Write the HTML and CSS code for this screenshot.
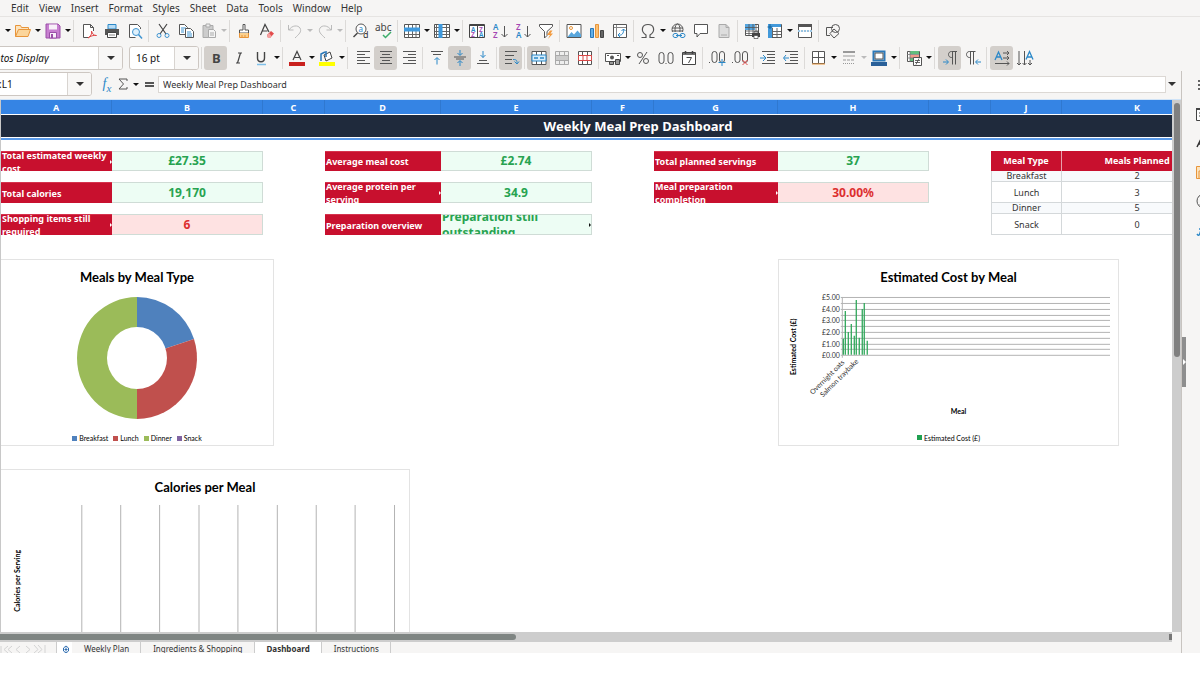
FILE: index.html
```html
<!DOCTYPE html>
<html lang="en">
<head>
<meta charset="utf-8">
<title>Weekly Meal Prep Dashboard</title>
<link rel="stylesheet" href="styles.css">
</head>
<body>
<div class="app">
  <nav class="menubar">
    <button>Edit</button><button>View</button><button>Insert</button><button>Format</button><button>Styles</button><button>Sheet</button><button>Data</button><button>Tools</button><button>Window</button><button>Help</button>
  </nav>

  <div class="toolbar standard">
    <button class="drop" aria-label="New options"></button>
    <button class="tool" aria-label="Open"><svg viewBox="0 0 16 16"><path d="M.5 13.500V2.500h5l1 2h7v2" fill="#fce3bd" stroke="#e8953a"/><path d="M.5 13.500 3.500 6.500h12l-2.500 7z" fill="#fbd59b" stroke="#e8953a"/></svg></button><button class="drop" aria-label="Open options"></button>
    <button class="tool" aria-label="Save"><svg viewBox="0 0 16 16"><path d="M1 1h12l2 2v12H1z" fill="#c77fd0" stroke="#9b4fa8"/><path d="M4 1.500h8v5H4z" fill="#f8f0f9"/><path d="M4.500 9.500h7V15h-7z" fill="#f8f0f9" stroke="#9b4fa8"/><path d="M6 11h2v4H6z" fill="#9b4fa8"/></svg></button><button class="drop" aria-label="Save options"></button>
    <span class="sep wide"></span>
    <button class="tool" aria-label="Export as PDF"><svg viewBox="0 0 16 16"><path d="M8 14.500H2.500v-13h7l3 3V8M9.500 1.500v3h3" fill="#fff" stroke="#555"/><path d="M7 15c3-2 4-4 3.500-7 1 3 2 4.500 5 4.500-3-.5-6 .5-8.500 2.500z" fill="none" stroke="#e04848"/></svg></button>
    <button class="tool" aria-label="Print"><svg viewBox="0 0 16 16"><path d="M4 1.500h8V6H4z" fill="#b7dcf5" stroke="#2b88c8"/><path d="M1 6h14v6H1z" fill="#555"/><path d="M3.500 9.500h9v5h-9z" fill="#fff" stroke="#444"/><path d="M5 12h6" stroke="#888"/></svg></button>
    <button class="tool" aria-label="Print preview"><svg viewBox="0 0 16 16"><path d="M13.500 6V4.500l-3-3h-8v13h6" fill="#fff" stroke="#555"/><circle cx="9" cy="9" r="3.500" fill="#dff0fb" stroke="#3f94d1"/><path d="m11.500 11.500 3.500 4" stroke="#3f94d1" stroke-width="1.500"/></svg></button>
    <span class="sep"></span>
    <button class="tool" aria-label="Cut"><svg viewBox="0 0 16 16" fill="none"><path d="M4 1l7 10M12 1 5 11" stroke="#444" stroke-width="1.200"/><circle cx="4" cy="12.500" r="2" stroke="#3f94d1"/><circle cx="12" cy="12.500" r="2" stroke="#3f94d1"/></svg></button>
    <button class="tool" aria-label="Copy"><svg viewBox="0 0 16 16"><path d="M1.500 1.500h5l3 3v7h-8z" fill="#fff" stroke="#555"/><path d="M3 5h5M3 7h3M3 9h3" stroke="#3f94d1"/><path d="M7.500 5.500h5l3 3v6h-8z" fill="#fff" stroke="#555"/><path d="M9 9h4M9 11h5M9 13h5" stroke="#3f94d1"/></svg></button>
    <button class="tool off" aria-label="Paste"><svg viewBox="0 0 16 16"><path d="M2 2.500h10v12H2z" fill="#ccc" stroke="#aaa"/><path d="M5 1h4v3H5z" fill="#eee" stroke="#aaa"/><path d="M7.500 6.500h5l2 2v6h-7z" fill="#f5f5f5" stroke="#aaa"/><path d="M9 10h4M9 12h4" stroke="#aaa"/></svg></button><button class="drop off" aria-label="Paste options"></button>
    <span class="sep"></span>
    <button class="tool" aria-label="Clone formatting"><svg viewBox="0 0 16 16"><path d="M7 1.500h2V7h3.500v3h-9V7H7z" fill="#fff" stroke="#555"/><path d="M3.500 10v4.500h9V10" fill="#fbd08e" stroke="#e8953a"/><path d="M6 12v2M9 12v2" stroke="#e8953a"/></svg></button>
    <button class="tool" aria-label="Clear formatting"><svg viewBox="0 0 16 16"><path d="M1.500 12 6 1.500 10 9M3.500 8h5" fill="none" stroke="#444" stroke-width="1.200"/><path d="m8 12 4-4 3 2.500L11 15H9z" fill="#e34c4c"/><path d="m8 12 2-2 2.500 3-1.500 2H9z" fill="#f4a0a0"/></svg></button>
    <span class="sep"></span>
    <button class="tool off" aria-label="Undo"><svg viewBox="0 0 16 16" fill="none" stroke="#bbb"><path d="M1.500 2v5h5M2 7c3-5 9-5 11-2 2 4-1 6-5 10"/></svg></button><button class="drop off" aria-label="Undo options"></button>
    <button class="tool off" aria-label="Redo"><svg viewBox="0 0 16 16" fill="none" stroke="#bbb"><path d="M14.500 2v5h-5M14 7C11 2 5 2 3 5c-2 4 1 6 5 10"/></svg></button><button class="drop off" aria-label="Redo options"></button>
    <span class="sep wide"></span>
    <button class="tool" aria-label="Find and replace"><svg viewBox="0 0 16 16"><circle cx="8" cy="6" r="5" fill="#fff" stroke="#555"/><path d="M4.500 10 .5 14" stroke="#444" stroke-width="1.500"/><text x="5.500" y="9" font-size="8" fill="#2b88c8">a</text><text x="10" y="15" font-size="9" fill="#333">d</text></svg></button>
    <button class="tool" aria-label="Spelling"><svg viewBox="0 0 16 16"><text x="-1" y="8" font-size="10" fill="#444">abc</text><path d="m7 12 2.500 2.500L15 9" fill="none" stroke="#3cae6a" stroke-width="1.500"/></svg></button>
    <span class="sep"></span>
    <button class="tool" aria-label="Row"><svg viewBox="0 0 16 16"><path d="M.5 1.500h15v13H.5z" fill="#fff" stroke="#555"/><path d="M4.500 2v12M8.500 2v12M12 2v12M1 11.500h14" stroke="#666"/><path d="M0 4.500h16v4H0z" fill="#3f9ade"/></svg></button><button class="drop" aria-label="Row options"></button>
    <button class="tool" aria-label="Column"><svg viewBox="0 0 16 16"><path d="M.5 1.500h15v13H.5z" fill="#fff" stroke="#555"/><path d="M1 4.500h14M1 8.500h14M1 11.500h14M12.500 2v12M2.500 2v12" stroke="#666"/><path d="M4.500 1h4v14h-4z" fill="#3f9ade"/></svg></button><button class="drop" aria-label="Column options"></button>
    <span class="sep"></span>
    <button class="tool" aria-label="Sort"><svg viewBox="0 0 16 16"><path d="M.5 1.500h15v13H.5z" fill="#fff" stroke="#444"/><path d="M1 2.500h14M8.500 2v12" stroke="#444"/><g font-size="6.500" font-weight="600"><text x="2" y="8.500" fill="#2b88c8">A</text><text x="2" y="14" fill="#a445b2">Z</text><text x="10" y="8.500" fill="#a445b2">Z</text><text x="10" y="14" fill="#2b88c8">A</text></g></svg></button>
    <button class="tool" aria-label="Sort ascending"><svg viewBox="0 0 16 16"><g font-size="8" font-weight="600"><text x="1" y="7" fill="#2b88c8">A</text><text x="1" y="15" fill="#a445b2">Z</text></g><path d="M12.500 3v11M9.500 11l3 3 3-3" fill="none" stroke="#555"/></svg></button>
    <button class="tool" aria-label="Sort descending"><svg viewBox="0 0 16 16"><g font-size="8" font-weight="600"><text x="1" y="7" fill="#a445b2">Z</text><text x="1" y="15" fill="#2b88c8">A</text></g><path d="M12.500 3v11M9.500 11l3 3 3-3" fill="none" stroke="#555"/></svg></button>
    <button class="tool" aria-label="AutoFilter"><svg viewBox="0 0 16 16"><path d="M1.500 1.500h13v2L9 8.500v4L6.500 15V8.500l-5-5z" fill="#fff" stroke="#555"/><path d="M12 7.500 9 12h3l-2 4 5-5.500h-2.500l2-3z" fill="#f29a3e"/></svg></button>
    <span class="sep"></span>
    <button class="tool" aria-label="Image"><svg viewBox="0 0 16 16"><path d="M1 1.500h14v13H1z" fill="#fff" stroke="#555"/><circle cx="5" cy="5" r="1.500" fill="none" stroke="#e8953a"/><path d="m1.500 14 4-5 2.500 2.500 3.500-4 3.500 4V14z" fill="#58a6dc"/></svg></button>
    <button class="tool" aria-label="Chart"><svg viewBox="0 0 16 16"><path d="M1.500 5.500h3v9h-3z" fill="#63b0e8" stroke="#2b78b8"/><path d="M6.500 1.500h3v13h-3z" fill="#fbc074" stroke="#e8953a"/><path d="M11.500 7.500h3v7h-3z" fill="#666" stroke="#444"/></svg></button>
    <button class="tool" aria-label="Pivot table"><svg viewBox="0 0 16 16"><path d="M1.500 1.500h13v13h-13z" fill="#fff" stroke="#555"/><path d="M2 4.500h12M4.500 2v12" stroke="#888"/><path d="M6 12c4 1 6-2 5.500-6M9.500 8l2-2 2 2M8 10l-2 2 2 2" fill="none" stroke="#2b88c8"/></svg></button>
    <span class="sep"></span>
    <button class="tool" aria-label="Special character"><svg viewBox="0 0 16 16"><path d="M1.500 14.500H6V12C0 8 2 1.500 8 1.500S16 8 10 12v2.500h4.500" fill="none" stroke="#555" stroke-width="1.200"/></svg></button><button class="drop" aria-label="Special character options"></button>
    <button class="tool" aria-label="Hyperlink"><svg viewBox="0 0 16 16" fill="none"><g stroke="#555"><circle cx="7.500" cy="6.500" r="5.500"/><ellipse cx="7.500" cy="6.500" rx="2.500" ry="5.500"/><path d="M2 5h11M2 8h11"/></g><path d="M2 9h14v7H2z" fill="#f6f5f4"/><g stroke="#2b88c8"><rect x="3" y="10.500" width="5" height="4" rx="2"/><rect x="10" y="10.500" width="5" height="4" rx="2"/><path d="M6 12.500h6"/></g></svg></button>
    <button class="tool" aria-label="Comment"><svg viewBox="0 0 16 16"><path d="M1.500 1.500h13v9H7L4 14v-3.500H1.500z" fill="#fff" stroke="#555"/></svg></button>
    <button class="tool off" aria-label="Headers and footers"><svg viewBox="0 0 16 16"><path d="M3 1.500h7l3 3v10H3z" fill="#ddd" stroke="#aaa"/><path d="M10 1.500v3h3M5 12h6" fill="none" stroke="#aaa"/></svg></button>
    <span class="sep"></span>
    <button class="tool" aria-label="Define print area"><svg viewBox="0 0 16 16"><path d="M1.500 1.500h13v11h-13z" fill="#fff" stroke="#555"/><path d="M1 1h10v6H1z" fill="#55a5df"/><path d="M1 4.500h14M1 8h14M1 10.500h8M5 1v12M9 1v9M12 1v8" stroke="#555" stroke-width=".8"/><path d="M8 10h8v4H8z" fill="#444"/><path d="M10 8.500h4V10h-4zM10 12.500h4v3h-4z" fill="#fff" stroke="#444" stroke-width=".7"/></svg></button>
    <button class="tool" aria-label="Freeze rows and columns"><svg viewBox="0 0 16 16"><path d="M1.500 1.500h13v13h-13z" fill="#fff" stroke="#555"/><path d="M1 1h13v3H1zM1 1h4v14H1z" fill="#4399da"/><path d="M5.500 5v9M10 5v9M5 8.500h9M5 11.500h9" stroke="#666"/><path d="M.5 4h5M3 1v5" stroke="#16649c"/></svg></button><button class="drop" aria-label="Freeze options"></button>
    <button class="tool" aria-label="Split window"><svg viewBox="0 0 16 16"><path d="M1.500 7V1.500h13V7M1.500 9v5.500h13V9" fill="#fff" stroke="#555"/><path d="M1 1h14v3H1z" fill="#555"/><path d="M1 8h14" stroke="#3f94d1" stroke-dasharray="2 1"/></svg></button>
    <span class="sep"></span>
    <button class="tool" aria-label="Show draw functions"><svg viewBox="0 0 16 16" fill="none" stroke="#555"><path d="M5 12.500H1.500v-8H8"/><circle cx="10.500" cy="5.500" r="4"/><path d="m9 6 5 4.500L9 15 5 10.500z"/></svg></button>
  </div>

  <div class="toolbar formatting">
    <div class="combo font-name"><input type="text" aria-label="Font name" value="Aptos Display"><button aria-label="Font list"></button></div>
    <div class="combo font-size"><input type="text" aria-label="Font size" value="16 pt"><button aria-label="Size list"></button></div>
    <span class="sep"></span>
    <button class="tool on" aria-label="Bold"><svg viewBox="0 0 16 16"><text x="4" y="13" font-size="13" font-weight="700" fill="#444">B</text></svg></button>
    <button class="tool" aria-label="Italic"><svg viewBox="0 0 16 16"><path d="M7 3h4M5 13h4M9.500 3l-3 10" fill="none" stroke="#444" stroke-width="1.200"/></svg></button>
    <button class="tool" aria-label="Underline"><svg viewBox="0 0 16 16"><path d="M3.500 2v6c0 5 7 5 7 0V2" fill="none" stroke="#444" stroke-width="1.400"/><path d="M3 14.500h9" stroke="#7fc0ea" stroke-width="1.500"/></svg></button><button class="drop" aria-label="Underline options"></button>
    <span class="sep"></span>
    <button class="tool" aria-label="Font colour"><svg viewBox="0 0 16 16"><path d="M4 10 8 1.500 12 10M5.500 7.500h5" fill="none" stroke="#444" stroke-width="1.200"/><path d="M0 12h16v4H0z" fill="#c9211e"/></svg></button><button class="drop" aria-label="Font colour options"></button>
    <button class="tool" aria-label="Background colour"><svg viewBox="0 0 16 16"><path d="m5 5 6-3 2 6-6 3z" fill="#fff" stroke="#444"/><path d="M2 11V4l4-2M7 1v6" fill="none" stroke="#2b78b8" stroke-width="1.500"/><path d="M0 12h16v4H0z" fill="#ff0"/></svg></button><button class="drop" aria-label="Background colour options"></button>
    <span class="sep wide"></span>
    <button class="tool" aria-label="Align left"><svg viewBox="0 0 16 16" stroke="#555"><path d="M2 1.500h13M2 4.500h8M2 7.500h13M2 10.500h8M2 13.500h13"/></svg></button>
    <button class="tool on" aria-label="Align centre"><svg viewBox="0 0 16 16" stroke="#555"><path d="M2 1.500h12M4 4.500h8M2 7.500h12M4 10.500h8M2 13.500h12"/></svg></button>
    <button class="tool" aria-label="Align right"><svg viewBox="0 0 16 16" stroke="#555"><path d="M2 1.500h13M7 4.500h8M2 7.500h13M7 10.500h8M2 13.500h13"/></svg></button>
    <span class="sep"></span>
    <button class="tool" aria-label="Align top"><svg viewBox="0 0 16 16" fill="none"><path d="M2 1.500h12M4 4.500h8" stroke="#555"/><path d="M8 14.500V8M5.500 10 8 7.500l2.500 2.500" stroke="#2b88c8"/></svg></button>
    <button class="tool on" aria-label="Centre vertically"><svg viewBox="0 0 16 16" fill="none"><path d="M2 7h12M4 9h8" stroke="#555"/><path d="M8 0v5M5.500 3 8 5.500 10.500 3M8 16v-5M5.500 13 8 10.500l2.500 2.500" stroke="#2b88c8"/></svg></button>
    <button class="tool" aria-label="Align bottom"><svg viewBox="0 0 16 16" fill="none"><path d="M4 10.500h8M2 13.500h12" stroke="#555"/><path d="M8 1v6.500M5.500 5 8 7.500 10.500 5" stroke="#2b88c8"/></svg></button>
    <span class="sep"></span>
    <button class="tool on" aria-label="Wrap text"><svg viewBox="0 0 16 16" fill="none"><path d="M2 1.500h12M2 5.500h9M2 9.500h7M2 13.500h7" stroke="#555"/><path d="M10 9.500c4 0 4 1 4 4M11.500 11.500l2.500 2.500 2-2.500" stroke="#2b88c8"/></svg></button>
    <span class="sep"></span>
    <button class="tool on" aria-label="Merge and centre cells"><svg viewBox="0 0 16 16"><path d="M1 1.500h14v13H1z" fill="#fff" stroke="#555"/><path d="M5.500 1v4M10.500 1v4M5.500 11v4M10.500 11v4" stroke="#555"/><path d="M1 5h14v6H1z" fill="#d7edfb" stroke="#2b88c8"/><path d="M3 8h10" stroke="#2b88c8" stroke-width="1.500" stroke-dasharray="4 2"/></svg></button>
    <button class="tool off" aria-label="Merge cells"><svg viewBox="0 0 16 16"><path d="M1.500 1.500h13v13h-13z" fill="#eee" stroke="#aaa"/><path d="M1 5.500h14M1 10.500h14M5.500 1v4M10.500 1v4M5.500 11v4M10.500 11v4" stroke="#aaa"/><path d="M2 6h12v4H2z" fill="#ccc"/></svg></button>
    <button class="tool" aria-label="Split cells"><svg viewBox="0 0 16 16"><path d="M1.500 1.500h13v13h-13z" fill="#fff" stroke="#555"/><path d="M5.500 1v4M10.500 1v4M5.500 11v4M10.500 11v4" stroke="#555"/><path d="M1.500 5.500h13v5h-13zM6 5v6M10 5v6" fill="#fff" stroke="#d94848"/></svg></button>
    <span class="sep"></span>
    <button class="tool" aria-label="Currency format"><svg viewBox="0 0 16 16"><path d="M.5 3.500h15v8H.5z" fill="#fff" stroke="#555"/><circle cx="7" cy="7.500" r="2" fill="#555"/><path d="M4.500 11.500h4v3h-4zM10.500 9.500h4v5h-4z" fill="#999" stroke="#444"/><path d="M2 5.500h2M12 5.500h2" stroke="#555"/></svg></button><button class="drop" aria-label="Currency options"></button>
    <button class="tool" aria-label="Percent format"><svg viewBox="0 0 16 16" fill="none" stroke="#555"><circle cx="5" cy="5" r="2.500"/><circle cx="11" cy="11" r="2.500"/><path d="M12 2 4 14"/></svg></button>
    <button class="tool" aria-label="Number format"><svg viewBox="0 0 16 16" fill="none" stroke="#555"><rect x="1" y="2.500" width="5" height="11" rx="2.500"/><rect x="10" y="2.500" width="5" height="11" rx="2.500"/><path d="M7.500 13.500h1"/></svg></button>
    <button class="tool" aria-label="Date format"><svg viewBox="0 0 16 16"><path d="M1.500 2.500h13v12h-13z" fill="#fff" stroke="#444"/><path d="M1 4h14M4.500 1v3M11.500 1v3" stroke="#444" stroke-width="1.500"/><path d="M5.500 7.500h5L7.500 13" fill="none" stroke="#444"/></svg></button>
    <span class="sep"></span>
    <button class="tool" aria-label="Add decimal place"><svg viewBox="0 0 16 16" fill="none" stroke="#555"><path d="M0 12.500h1"/><rect x="3" y="1.500" width="5" height="11" rx="2.500"/><rect x="10.500" y="1.500" width="5" height="11" rx="2.500"/><path d="M13 9v7M9.500 12.500h7" stroke="#2b88c8"/></svg></button>
    <button class="tool" aria-label="Delete decimal place"><svg viewBox="0 0 16 16" fill="none" stroke="#555"><path d="M0 12.500h1"/><rect x="3" y="1.500" width="5" height="11" rx="2.500"/><rect x="10.500" y="1.500" width="5" height="11" rx="2.500"/><path d="m10.500 10 5 5M15.500 10l-5 5" stroke="#e34c4c"/></svg></button>
    <span class="sep"></span>
    <button class="tool" aria-label="Increase indent"><svg viewBox="0 0 16 16" fill="none"><path d="M2 1.500h13M7 4.500h8M7 7.500h8M7 10.500h8M2 13.500h13" stroke="#555"/><path d="M0 8h5M3 5l3 3-3 3" stroke="#2b88c8"/></svg></button>
    <button class="tool" aria-label="Decrease indent"><svg viewBox="0 0 16 16" fill="none"><path d="M2 1.500h13M7 4.500h8M7 7.500h8M7 10.500h8M2 13.500h13" stroke="#555"/><path d="M6 8H1M3 5 .5 8 3 11" stroke="#2b88c8"/></svg></button>
    <span class="sep"></span>
    <button class="tool" aria-label="Borders"><svg viewBox="0 0 16 16"><path d="M1.500 1.500h12v12h-12z" fill="#fff" stroke="#555"/><path d="M7.500 1v13M1 7.500h13" stroke="#555"/><path d="M1 14h13" stroke="#e8953a"/></svg></button><button class="drop" aria-label="Border options"></button>
    <button class="tool off" aria-label="Border style"><svg viewBox="0 0 16 16" stroke="#999"><path d="M2 2h12" stroke-width="2"/><path d="M2 6h12"/><path d="M2 10h12" stroke-dasharray="3 1"/><path d="M2 13.500h12" stroke-dasharray="1 1"/></svg></button><button class="drop off" aria-label="Border style options"></button>
    <button class="tool" aria-label="Border colour"><svg viewBox="0 0 16 16"><path d="M2.500 1.500h11v9h-11z" fill="#fff" stroke="#2b78b8" stroke-width="2"/><path d="M4 3h8v6H4z" fill="none" stroke="#555"/><path d="M0 12h16v4H0z" fill="#2a6099"/></svg></button><button class="drop" aria-label="Border colour options"></button>
    <span class="sep"></span>
    <button class="tool" aria-label="Conditional formatting"><svg viewBox="0 0 16 16"><path d="M1.500 1.500h12v10h-12z" fill="#fff" stroke="#555"/><path d="M4 1h9v3H4z" fill="#62bd7d"/><path d="M4 5h9v3H4z" fill="#f29a8a"/><path d="M4 8h4v3H4z" fill="#62bd7d"/><path d="M4 1v11M1 4.500h12M1 8h6" stroke="#777" stroke-width=".8"/><path d="M7.500 7.500h8v8h-8z" fill="#fff" stroke="#555"/><path d="M9 10.500h5M9 12.500h5M13 8.500l-3 6" stroke="#444" stroke-width=".8"/></svg></button><button class="drop" aria-label="Conditional options"></button>
    <span class="sep wide"></span>
    <button class="tool on" aria-label="Left-to-right"><svg viewBox="0 0 16 16" fill="none"><path d="M15 1.500H9.500c-4 0-4 6 0 6h1M10.500 1.500v13M13.500 1.500v13" stroke="#555"/><path d="M1 12h5M4 9.500 6.500 12 4 14.500" stroke="#2b88c8"/></svg></button>
    <button class="tool" aria-label="Right-to-left"><svg viewBox="0 0 16 16" fill="none"><path d="M10.500 1.500h-6c-4 0-4 6 0 6h1M5.500 1.500v13M8.500 1.500v13" stroke="#555"/><path d="M16 12h-5M13 9.500 10.500 12l2.500 2.500" stroke="#2b88c8"/></svg></button>
    <span class="sep wide"></span>
    <button class="tool on" aria-label="Text direction left to right"><svg viewBox="0 0 16 16" fill="none"><path d="m1 10 3.500-8L8 10M2.500 7h4" stroke="#2b88c8" stroke-width="1.300"/><path d="M9 3h6M9 8h6M1 13.500h14M13 1l2 2-2 2M13 6l2 2-2 2M13 11.500l2 2-2 2" stroke="#555"/></svg></button>
    <button class="tool" aria-label="Text direction top to bottom"><svg viewBox="0 0 16 16" fill="none"><path d="M9 9.500 12.500 1.500 16 9.500M10.500 7h4" stroke="#2b88c8" stroke-width="1.300"/><path d="M2 1v14M7.500 1v14M13 10v5M0 13l2 2 2-2M5.500 13l2 2 2-2M11 13l2 2 2-2" stroke="#555"/></svg></button>
  </div>

  <div class="workspace">
    <main class="document">
      <div class="formula-bar">
        <div class="combo name-box"><input type="text" aria-label="Name box" value="A1:L1"><button aria-label="Name list"></button></div>
        <button class="fx" aria-label="Function wizard">f<sub>x</sub></button>
        <button class="sigma" aria-label="Select function"><svg viewBox="0 0 10 12"><path d="M9 3V1H1l4.500 5L1 11h8V9" fill="none" stroke="#555"/></svg></button><button class="drop" aria-label="Function options"></button>
        <button class="equals" aria-label="Formula"></button>
        <input class="formula" type="text" aria-label="Input line" value="Weekly Meal Prep Dashboard">
        <button class="expand" aria-label="Expand formula bar"></button>
      </div>

      <div class="viewport">
        <div class="sheet">
          <table class="grid">
            <colgroup><col class="w-label-a"><col class="w-value"><col class="w-gap"><col class="w-label-d"><col class="w-value"><col class="w-gap"><col class="w-label-g"><col class="w-value"><col class="w-gap"><col class="w-type"><col class="w-value"><col class="w-gap"></colgroup>
            <thead><tr><th>A</th><th>B</th><th>C</th><th>D</th><th>E</th><th>F</th><th>G</th><th>H</th><th>I</th><th>J</th><th>K</th><th></th></tr></thead>
            <tbody>
              <tr class="title-row"><td colspan="12">Weekly Meal Prep Dashboard</td></tr>
              <tr class="small"><td colspan="12"></td></tr>
              <tr class="big">
                <td class="label more"><div>Total estimated weekly cost</div></td><td class="value">£27.35</td><td></td>
                <td class="label"><div>Average meal cost</div></td><td class="value">£2.74</td><td></td>
                <td class="label"><div>Total planned servings</div></td><td class="value">37</td><td></td>
                <td class="head">Meal Type</td><td class="head">Meals Planned</td><td></td>
              </tr>
              <tr class="small"><td colspan="9"></td><td class="data alt">Breakfast</td><td class="data alt">2</td><td></td></tr>
              <tr class="big">
                <td class="label"><div>Total calories</div></td><td class="value">19,170</td><td></td>
                <td class="label more"><div>Average protein per serving</div></td><td class="value">34.9</td><td></td>
                <td class="label more"><div>Meal preparation completion</div></td><td class="value bad">30.00%</td><td></td>
                <td class="data">Lunch</td><td class="data">3</td><td></td>
              </tr>
              <tr class="small"><td colspan="9"></td><td class="data alt">Dinner</td><td class="data alt">5</td><td></td></tr>
              <tr class="big">
                <td class="label more"><div>Shopping items still required</div></td><td class="value bad">6</td><td></td>
                <td class="label"><div>Preparation overview</div></td><td class="value wrap more"><div>Preparation still outstanding</div></td><td></td>
                <td></td><td></td><td></td>
                <td class="data">Snack</td><td class="data">0</td><td></td>
              </tr>
            </tbody>
          </table>

          <div class="charts">
            <section class="chart meals">
              <h2>Meals by Meal Type</h2>
              <svg class="donut" viewBox="0 0 120 122">
                <path d="M60 0A60 61 0 0 1 117 42L60 61z" fill="#4f81bd"/>
                <path d="M117 42A60 61 0 0 1 60 122V61z" fill="#c0504d"/>
                <path d="M60 122A60 61 0 0 1 60 0z" fill="#9bbb59"/>
                <ellipse cx="60" cy="61" rx="30" ry="31" fill="#fff"/>
              </svg>
              <ul class="legend"><li class="blue">Breakfast</li><li class="red">Lunch</li><li class="lime">Dinner</li><li class="purple">Snack</li></ul>
            </section>
            <section class="chart cost">
              <h2>Estimated Cost by Meal</h2>
              <svg class="plot" viewBox="0 0 340 130">
                <g stroke="#b3b3b3"><path d="M62 6.500h270M62 12.500h270M62 18.500h270M62 24.500h270M62 29.500h270M62 35.500h270M62 41.500h270M62 47.500h270M62 53.500h270M62 58.500h270M62 64.500h270M63.500 6v61"/></g>
                <path d="M64.500 64V48M66.500 64V20M69.500 64V41M72.500 64V33M75.500 64V45M77.500 64V9M80.500 64V47M83.500 64V18M85.500 64V12M88.500 64V50" stroke="#2fa75a" stroke-width="1.300"/>
                <g class="tick"><text x="61" y="9">£5.00</text><text x="61" y="21">£4.00</text><text x="61" y="32">£3.00</text><text x="61" y="44">£2.00</text><text x="61" y="56">£1.00</text><text x="61" y="67">£0.00</text>
                <text transform="translate(66 72) rotate(-45)">Overnight oats</text><text transform="translate(80 71) rotate(-45)">Salmon traybake</text></g>
                <text class="axis" text-anchor="middle" transform="translate(17 56) rotate(-90)">Estimated Cost (£)</text>
                <text class="axis" text-anchor="middle" x="180" y="123">Meal</text>
              </svg>
              <ul class="legend"><li class="green">Estimated Cost (£)</li></ul>
            </section>
          </div>
          <section class="chart calories">
            <h2>Calories per Meal</h2>
            <svg class="plot" viewBox="0 0 409 200">
              <path d="M81 6v194M120 6v194M159 6v194M198.500 6v194M237.500 6v194M277 6v194M316 6v194M355 6v194M394.500 6v194" stroke="#b3b3b3"/>
              <text class="axis" text-anchor="middle" transform="translate(19 82) rotate(-90)">Calories per Serving</text>
            </svg>
          </section>
        </div>
        <div class="vscroll"><div class="thumb"></div></div>
      </div>

      <div class="hscroll"><div class="thumb"></div><div class="end"></div></div>
      <div class="tabs">
        <span class="tab-nav"><svg viewBox="0 0 48 12" fill="none" stroke="#d4d4d4"><path d="M1 4v7M8 4 4 7.500 8 11M12 4 8 7.500l4 3.500M20 4l-4 3.500 4 3.500M26 4l4 3.500-4 3.500M34 3l4 4.500-4 3.500M38 3l4 4.500-4 3.500M45 3v8"/></svg></span>
        <button class="add" aria-label="Add sheet"><svg viewBox="0 0 8 10" fill="none" stroke="#2f6db0"><path d="M1.500 4 4 2l2.500 2v3L4 9 1.500 7zM4 3.500v4M2.500 5.500h3"/></svg></button>
        <button>Weekly Plan</button><button>Ingredients &amp; Shopping</button><button class="current">Dashboard</button><button>Instructions</button>
      </div>
    </main>

    <aside class="sidebar">
      <button class="handle" aria-label="Hide sidebar"></button>
      <div class="decks">
        <button aria-label="Sidebar settings"><svg viewBox="0 0 16 16"><path d="M2 4h12M2 8h12M2 12h12" stroke="#333" stroke-width="1.500"/></svg></button>
        <button aria-label="Properties"><svg viewBox="0 0 16 16"><path d="M.5 2.500h15v12H.5z" fill="#fff" stroke="#444"/><path d="M0 3h16" stroke="#444" stroke-width="2"/><path d="M3 7h10M3 10h10" stroke="#444"/></svg></button>
        <button aria-label="Styles"><svg viewBox="0 0 16 16"><path d="M1 12 6 2l5 10M3 9h6M4 14h8" fill="none" stroke="#333" stroke-width="1.500"/></svg></button>
        <button aria-label="Gallery"><svg viewBox="0 0 16 16"><path d="M.5 2.500h15v12H.5z" fill="#fce3bd" stroke="#e8953a"/><path d="M3 14V7h12" fill="none" stroke="#e8953a"/></svg></button>
        <button aria-label="Navigator"><svg viewBox="0 0 16 16"><circle cx="8" cy="8" r="7" fill="none" stroke="#555"/><path d="m4 12 2.500-5L12 4" fill="none" stroke="#555"/></svg></button>
        <button aria-label="Functions"><svg viewBox="0 0 16 16"><path d="M1 12c2 3 3 0 4-4s2-6 5-5M3 7h6" fill="none" stroke="#2b88c8" stroke-width="1.500"/></svg></button>
      </div>
    </aside>
  </div>
</div>
</body>
</html>
```
FILE: styles.css
```css
* { box-sizing: border-box; }
body { margin: 0; background: #fff; color: #333; font: 9px/12px "Noto Sans", sans-serif; }
button, input { margin: 0; padding: 0; border: 0; background: none; color: inherit; font: inherit; }
ul, h2 { margin: 0; padding: 0; list-style: none; }
svg { display: block; overflow: visible; }

.app { display: flex; flex-direction: column; height: calc(100vh - 22px); overflow: hidden; background: #f6f5f4; }

.menubar { display: flex; gap: 10px; height: 17px; padding: 2px 0 2px 11px; border-bottom: 1px solid #e6e4e2; font-size: 10px; }
.menubar button { white-space: nowrap; }

.toolbar { display: flex; flex: none; align-items: center; height: 27px; }
.standard { padding-left: 4px; }
.tool { display: flex; flex: none; align-items: center; justify-content: center; width: 23px; height: 24px; border-radius: 3px; }
.tool svg { width: 16px; height: 16px; }
.tool.on { background: #d3cfcb; }
.drop { display: flex; flex: none; align-items: center; justify-content: center; width: 7px; height: 24px; }
.drop::after, .combo button::after, .expand::after { content: ""; border: 3px solid transparent; border-top-color: #111; border-bottom: 0; }
.drop.off::after { border-top-color: #bbb; }
.sep { flex: none; width: 5px; height: 22px; background: linear-gradient(#dcdad8, #dcdad8) 2px 0 / 1px 100% no-repeat; }
.sep.wide { width: 6px; }

.combo { display: flex; flex: none; height: 24px; border: 1px solid #cdc7c2; border-radius: 3px; background: #fff; overflow: hidden; }
.combo input { flex: 1; min-width: 0; font-size: 10px; color: #111; }
.combo button { display: flex; align-items: center; justify-content: center; width: 24px; border-left: 1px solid #d8d4d0; background: #f8f7f6; }
.combo button::after, .expand::after { border-width: 4px 4px 0; border-top-color: #333; }
.font-name { width: 136px; margin-left: -13px; }
.font-name input { font-style: italic; text-indent: 1px; }
.font-size { width: 70px; margin-left: 6px; }
.font-size input { padding-left: 6px; }

.workspace { display: flex; flex: 1; min-height: 0; }
.document { display: flex; flex: 1; flex-direction: column; min-width: 0; }
.formula-bar { display: flex; flex: none; align-items: center; height: 28px; padding-bottom: 2px; }
.name-box { width: 109px; height: 24px; margin-left: -17px; }
.name-box input { padding-left: 3px; }
.fx { width: 16px; margin-left: 7px; color: #2b88c8; font: italic 14px/16px "Liberation Serif", serif; white-space: nowrap; }
.fx sub { font-size: 11px; line-height: 0; }
.sigma { width: 10px; margin: 0 4px 0 3px; }
.equals { width: 9px; height: 5px; margin: 0 4px 0 6px; border: solid #555; border-width: 2px 0; }
.formula { flex: 1; min-width: 0; height: 17px; padding: 0 4px; border: 1px solid #dcd8d4; background: #fff; }
.expand { display: flex; justify-content: center; width: 15px; padding-right: 3px; }

.viewport { display: flex; flex: 1; min-height: 0; border-top: 1px solid #cfe3f7; }
.sheet { flex: 1; min-width: 0; overflow: hidden; border-left: 1px solid #c8c8c8; background: #fff; }
.grid { width: 1274px; border-collapse: separate; border-spacing: 0; table-layout: fixed; }
.w-label-a { width: 111px; }
.w-value { width: 151px; }
.w-gap { width: 62px; }
.w-label-d { width: 116px; }
.w-label-g { width: 124px; }
.w-type { width: 71px; }
.grid th, .grid td { padding: 0; text-align: center; vertical-align: middle; overflow: hidden; white-space: nowrap; }
.grid th { height: 14px; border-right: 1px solid #2f78d0; background: #3584e4; color: #fff; line-height: 13px; }
.title-row td { height: 26px; border: solid #5a9ae8; border-width: 0 0 2px; background: #1f2a3c; box-shadow: inset 0 1px #fff, inset 0 -1px #fff; color: #fff; font-size: 13px; font-weight: 700; line-height: 22px; }
.small td { height: 11px; line-height: 10px; }
.big td { height: 20px; line-height: 18px; }
.big + .small + .big td { height: 21px; line-height: 19px; }
.small + .big td.label, .small + .big td.wrap { text-align: left; white-space: normal; }
.grid .label { position: relative; border: 1px solid #d6334d; border-width: 1px 0 0; background: #c8102e; color: #fff; font-weight: 700; }
.label div, .wrap div { display: flex; align-items: center; height: 19px; padding: 0 5px 0 1px; line-height: 13px; }
.grid .value { position: relative; border: 1px solid #cfdcd6; border-left: 0; background: #edfdf4; color: #27a350; font-size: 12px; font-weight: 700; }
.grid .bad { background: #fee2e2; color: #dc2f2f; }
.wrap div { line-height: 16px; }
.more::after { content: ""; position: absolute; top: 8px; right: 0; border: 2px solid transparent; border-left-color: #fff; border-right: 0; }
.value.more::after { border-left-color: #111; }
.grid .head { border-right: 1px solid #e8a0ab; background: #c8102e; color: #fff; font-weight: 700; }
.grid .data { border: solid #d4d8da; border-width: 0 1px 1px 0; }
.grid .alt { background: #f8fafc; }
.grid .data:nth-last-child(3) { border-left: 1px solid #d4d8da; }

.charts { display: flex; gap: 504px; margin-top: 24px; }
.chart { flex: none; border: 1px solid #e3e3e3; background: #fff; color: #000; font-family: Lato, sans-serif; }
.chart h2 { padding-top: 9px; font-size: 13px; line-height: 16px; text-align: center; }
.chart .plot { width: 100%; }
.chart text { font-size: 7px; }
.tick text { text-anchor: end; fill: #333; }
.chart .axis { font-weight: 700; }
.meals { width: 273px; height: 187px; border-left: 0; }
.donut { width: 120px; height: 122px; margin: 12px auto 14px; }
.cost { width: 341px; }
.cost .plot { margin: 6px 0 12px; }
.calories { width: 409px; height: 240px; margin-top: 23px; border-left: 0; }
.calories .plot { margin-top: 4px; }
.legend { display: flex; justify-content: center; gap: 5px; font-size: 7px; line-height: 10px; }
.legend li { display: flex; align-items: center; gap: 2px; }
.legend li::before { content: ""; width: 5px; height: 5px; background: #4f81bd; }
.legend .red::before { background: #c0504d; }
.legend .lime::before { background: #9bbb59; }
.legend .purple::before { background: #8064a2; }
.legend .green::before { background: #1fa050; }

.vscroll { width: 9px; padding: 3px 1px 0 2px; background: #cdcdcd; }
.vscroll .thumb { height: 48%; border-radius: 3px; background: #808080; }
.hscroll { display: flex; flex: none; justify-content: space-between; align-items: center; height: 10px; margin-right: 9px; background: #cdcdcd; }
.hscroll .thumb { width: 44%; height: 6px; border-radius: 0 3px 3px 0; background: #7f8583; }
.hscroll .end { width: 3px; height: 6px; background: #777; }

.tabs { display: flex; flex: none; height: 11px; overflow: hidden; font-size: 8px; line-height: 14px; }
.tabs button { flex: none; height: 14px; padding: 0 11px 0 12px; border-right: 1px solid #ccc; }
.tabs .tab-nav { width: 57px; border-right: 1px solid #ccc; }
.tab-nav svg { width: 48px; height: 12px; }
.tabs .add { width: 15px; padding: 2px 2px 2px 5px; border: 0; background: #fff; }
.tabs .add svg { width: 8px; height: 10px; }
.tabs .current { background: #fff; font-weight: 700; }

.sidebar { display: flex; flex: none; width: 19px; overflow: hidden; border-left: 1px solid #c8c4c0; }
.handle { display: flex; flex: none; align-self: center; align-items: center; justify-content: center; width: 4px; height: 50px; background: #8e8e8e; }
.handle::after { content: ""; border: 3px solid transparent; border-left-color: #fff; border-right: 0; }
.decks { display: flex; flex-direction: column; gap: 13px; padding: 6px 0 0 10px; }
.decks svg { width: 16px; height: 16px; }
```
